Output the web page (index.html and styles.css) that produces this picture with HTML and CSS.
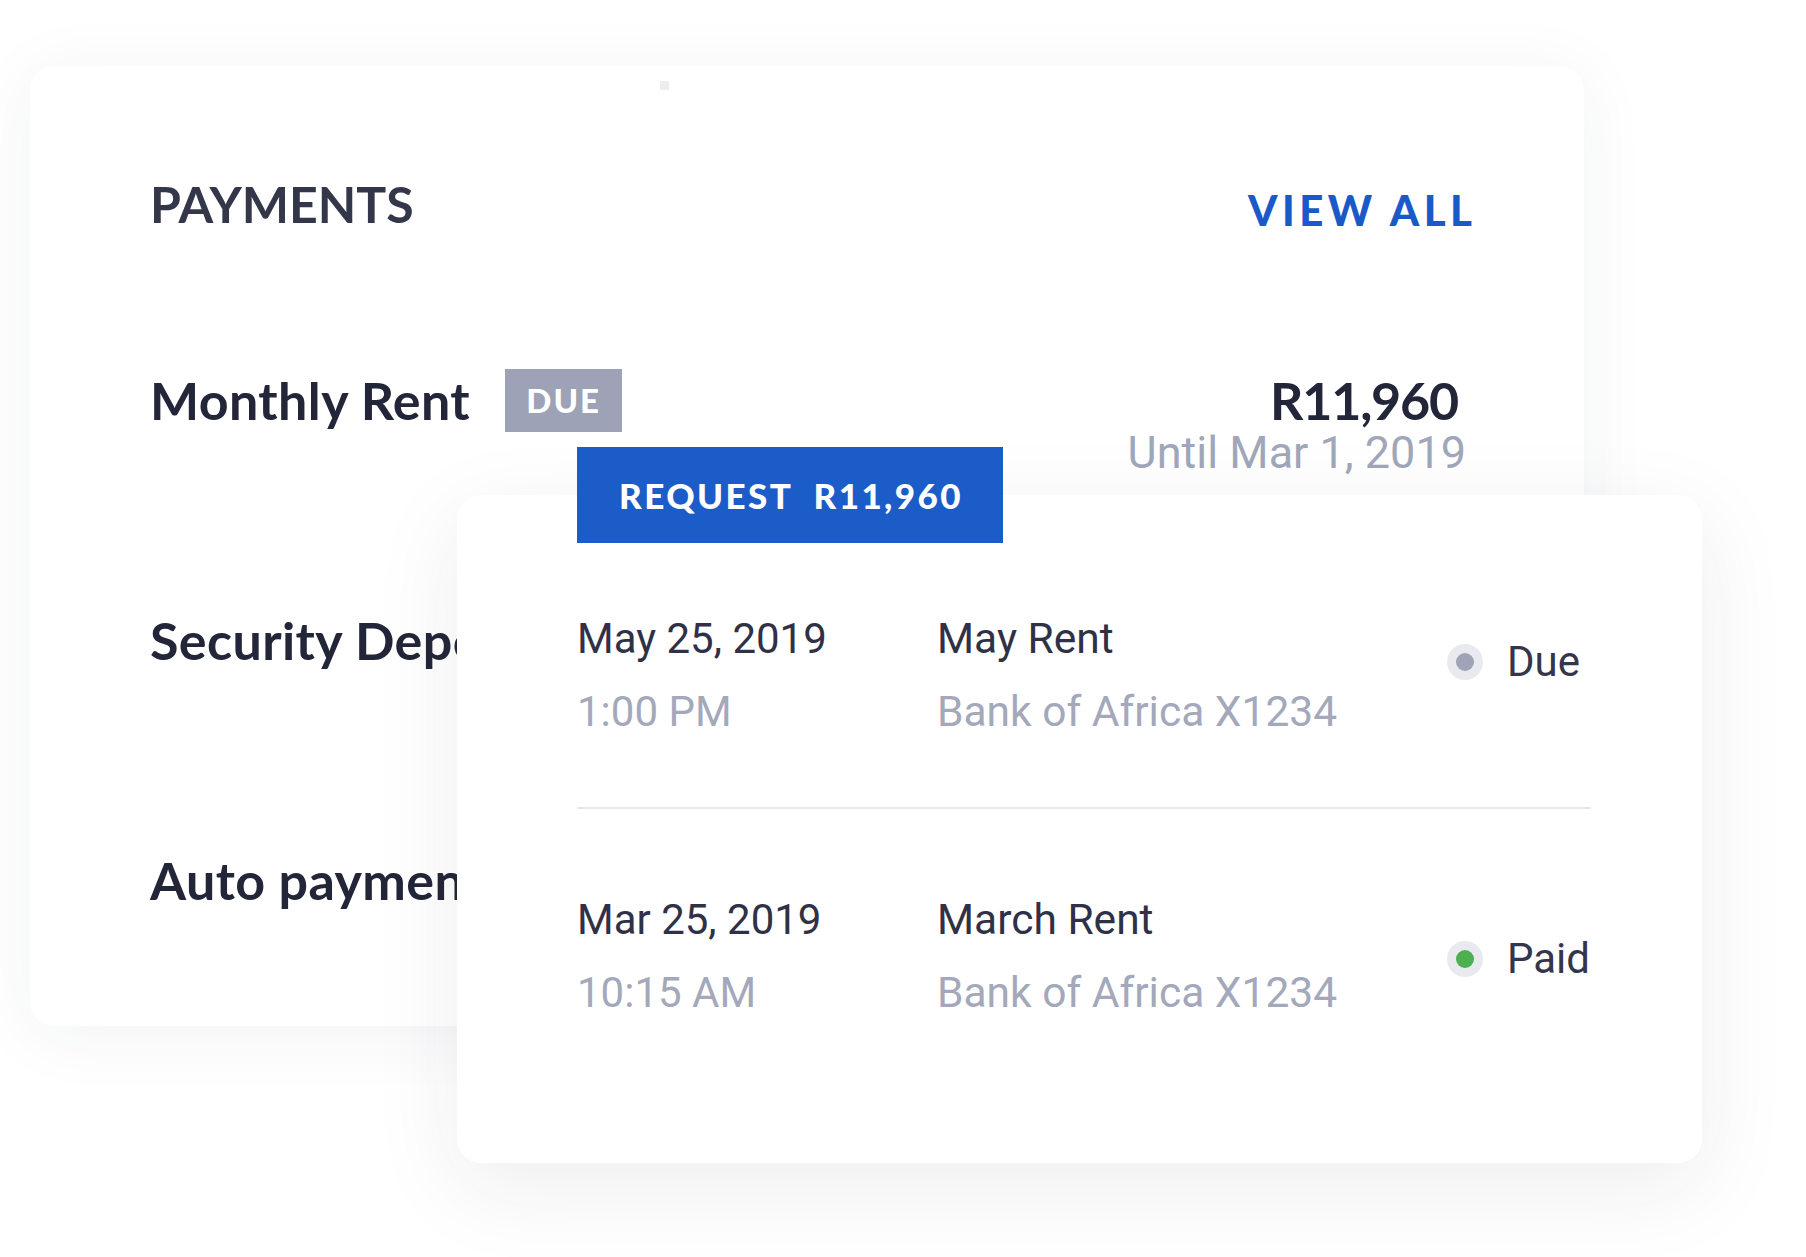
FILE: index.html
```html
<!DOCTYPE html>
<html lang="en">
<head>
<meta charset="utf-8">
<title>Payments</title>
<link rel="stylesheet" href="styles.css">
</head>
<body>
<div class="stage">
  <section class="card card--back">
    <span class="notch"></span>
    <header class="card-header">
      <h2 class="title">PAYMENTS</h2>
      <a class="view-all">VIEW ALL</a>
    </header>
    <div class="item item--rent">
      <div class="item-label">
        <span class="label">Monthly Rent</span>
        <span class="badge">DUE</span>
      </div>
      <div class="amount">
        <div class="amount-value">R11,960</div>
        <div class="amount-until">Until Mar 1, 2019</div>
      </div>
    </div>
    <div class="item">
      <div class="item-label"><span class="label">Security Deposit</span></div>
    </div>
    <div class="item item--last">
      <div class="item-label"><span class="label">Auto payments</span></div>
    </div>
  </section>

  <section class="card card--front">
    <button class="request" type="button">REQUEST&nbsp;&nbsp;R11,960</button>
    <div class="tx tx--first">
      <div class="tx-col">
        <div class="tx-line tx-main">May 25, 2019</div>
        <div class="tx-line tx-sub">1:00 PM</div>
      </div>
      <div class="tx-col">
        <div class="tx-line tx-main">May Rent</div>
        <div class="tx-line tx-sub">Bank of Africa X1234</div>
      </div>
      <div class="status"><span class="dot dot--due"></span><span>Due</span></div>
    </div>
    <div class="tx tx--second">
      <div class="tx-col">
        <div class="tx-line tx-main">Mar 25, 2019</div>
        <div class="tx-line tx-sub">10:15 AM</div>
      </div>
      <div class="tx-col">
        <div class="tx-line tx-main">March Rent</div>
        <div class="tx-line tx-sub">Bank of Africa X1234</div>
      </div>
      <div class="status"><span class="dot dot--paid"></span><span>Paid</span></div>
    </div>
  </section>
</div>
</body>
</html>
```

FILE: styles.css
```css
body {
  margin: 0;
  background: #ffffff;
  font-family: Roboto, "Liberation Sans", sans-serif;
}

.stage {
  position: relative;
  width: 1806px;
  height: 1257px;
  overflow: hidden;
}

.card {
  background: #ffffff;
  border-radius: 24px;
  box-sizing: border-box;
}

/* Back card */
.card--back {
  position: relative;
  width: 1554px;
  margin: 66px 0 0 30px;
  padding: 108px 112px 114px 120px;
  box-shadow: 0 8px 70px rgba(40, 44, 70, 0.06);
}

.notch {
  position: absolute;
  top: 15px;
  left: 630px;
  width: 9px;
  height: 9px;
  background: #eceef2;
}

.card-header {
  display: flex;
  justify-content: space-between;
  align-items: baseline;
  font-family: Lato, "Liberation Sans", sans-serif;
}

.title {
  margin: 0;
  font-size: 50px;
  line-height: 60px;
  font-weight: 700;
  color: #34374a;
  letter-spacing: 0;
}

.view-all {
  position: relative;
  top: 3px;
  font-size: 42px;
  line-height: 60px;
  font-weight: 900;
  color: #1a5ac8;
  letter-spacing: 4.5px;
  margin-right: -4.5px;
}

.item {
  height: 240px;
  display: flex;
  justify-content: space-between;
  align-items: flex-start;
}

.item--rent {
  margin-top: 131px;
}

.item--last {
  height: 64px;
}

.item-label {
  display: flex;
  align-items: center;
  height: 64px;
}

.label {
  font-family: Lato, "Liberation Sans", sans-serif;
  font-size: 52px;
  line-height: 64px;
  font-weight: 700;
  color: #232638;
  letter-spacing: 0.4px;
  white-space: nowrap;
}

.badge {
  margin: 0 0 0 35px;
  width: 117px;
  height: 63px;
  display: flex;
  align-items: center;
  justify-content: center;
  background: #9da2b6;
  color: #ffffff;
  font-family: Lato, "Liberation Sans", sans-serif;
  font-weight: 900;
  font-size: 33px;
  letter-spacing: 2px;
}

.amount {
  text-align: right;
  margin-right: 6px;
}

.amount-value {
  font-family: Lato, "Liberation Sans", sans-serif;
  font-weight: 700;
  font-size: 52px;
  line-height: 64px;
  color: #232638;
  letter-spacing: -1.2px;
  margin-right: 8px;
}

.amount-until {
  margin-top: -4px;
  font-size: 45px;
  line-height: 50px;
  color: #a1a7ba;
}

/* Front card */
.card--front {
  position: absolute;
  left: 457px;
  top: 495px;
  width: 1245px;
  padding: 0 111px 60px 120px;
  box-shadow: 0 24px 90px rgba(40, 44, 70, 0.08);
}

.request {
  display: flex;
  align-items: center;
  justify-content: center;
  width: 426px;
  height: 96px;
  margin: -48px 0 0 0;
  padding: 0 0 0 2px;
  border: 0;
  background: #1c5cc8;
  color: #ffffff;
  font-family: Lato, "Liberation Sans", sans-serif;
  font-weight: 900;
  font-size: 35px;
  letter-spacing: 2.4px;
}

.tx {
  display: grid;
  grid-template-columns: 360px 510px auto;
  align-items: center;
  padding: 59px 0;
}

.tx--first {
  border-bottom: 2px solid #e8e9ee;
}

.tx--second {
  padding: 74px 0;
}

.tx-line {
  font-size: 42px;
  line-height: 73px;
  white-space: nowrap;
}

.tx-col:nth-child(2) .tx-line {
  font-size: 42.5px;
}

.tx-main {
  color: #2f3146;
}

.tx-sub {
  color: #a3a8bb;
}

.status {
  display: flex;
  align-items: center;
  gap: 24px;
  font-size: 42px;
  line-height: 44px;
  color: #34364b;
}

.tx--first .status {
  margin-bottom: 26px;
}

.tx--second .status {
  margin-top: 6px;
}

.dot {
  width: 36px;
  height: 36px;
  border-radius: 50%;
  background: #e9eaf0;
  display: flex;
  align-items: center;
  justify-content: center;
  flex: none;
}

.dot::after {
  content: "";
  width: 18px;
  height: 18px;
  border-radius: 50%;
}

.dot--due::after {
  background: #9ea3b8;
}

.dot--paid::after {
  background: #4caf50;
}
```
